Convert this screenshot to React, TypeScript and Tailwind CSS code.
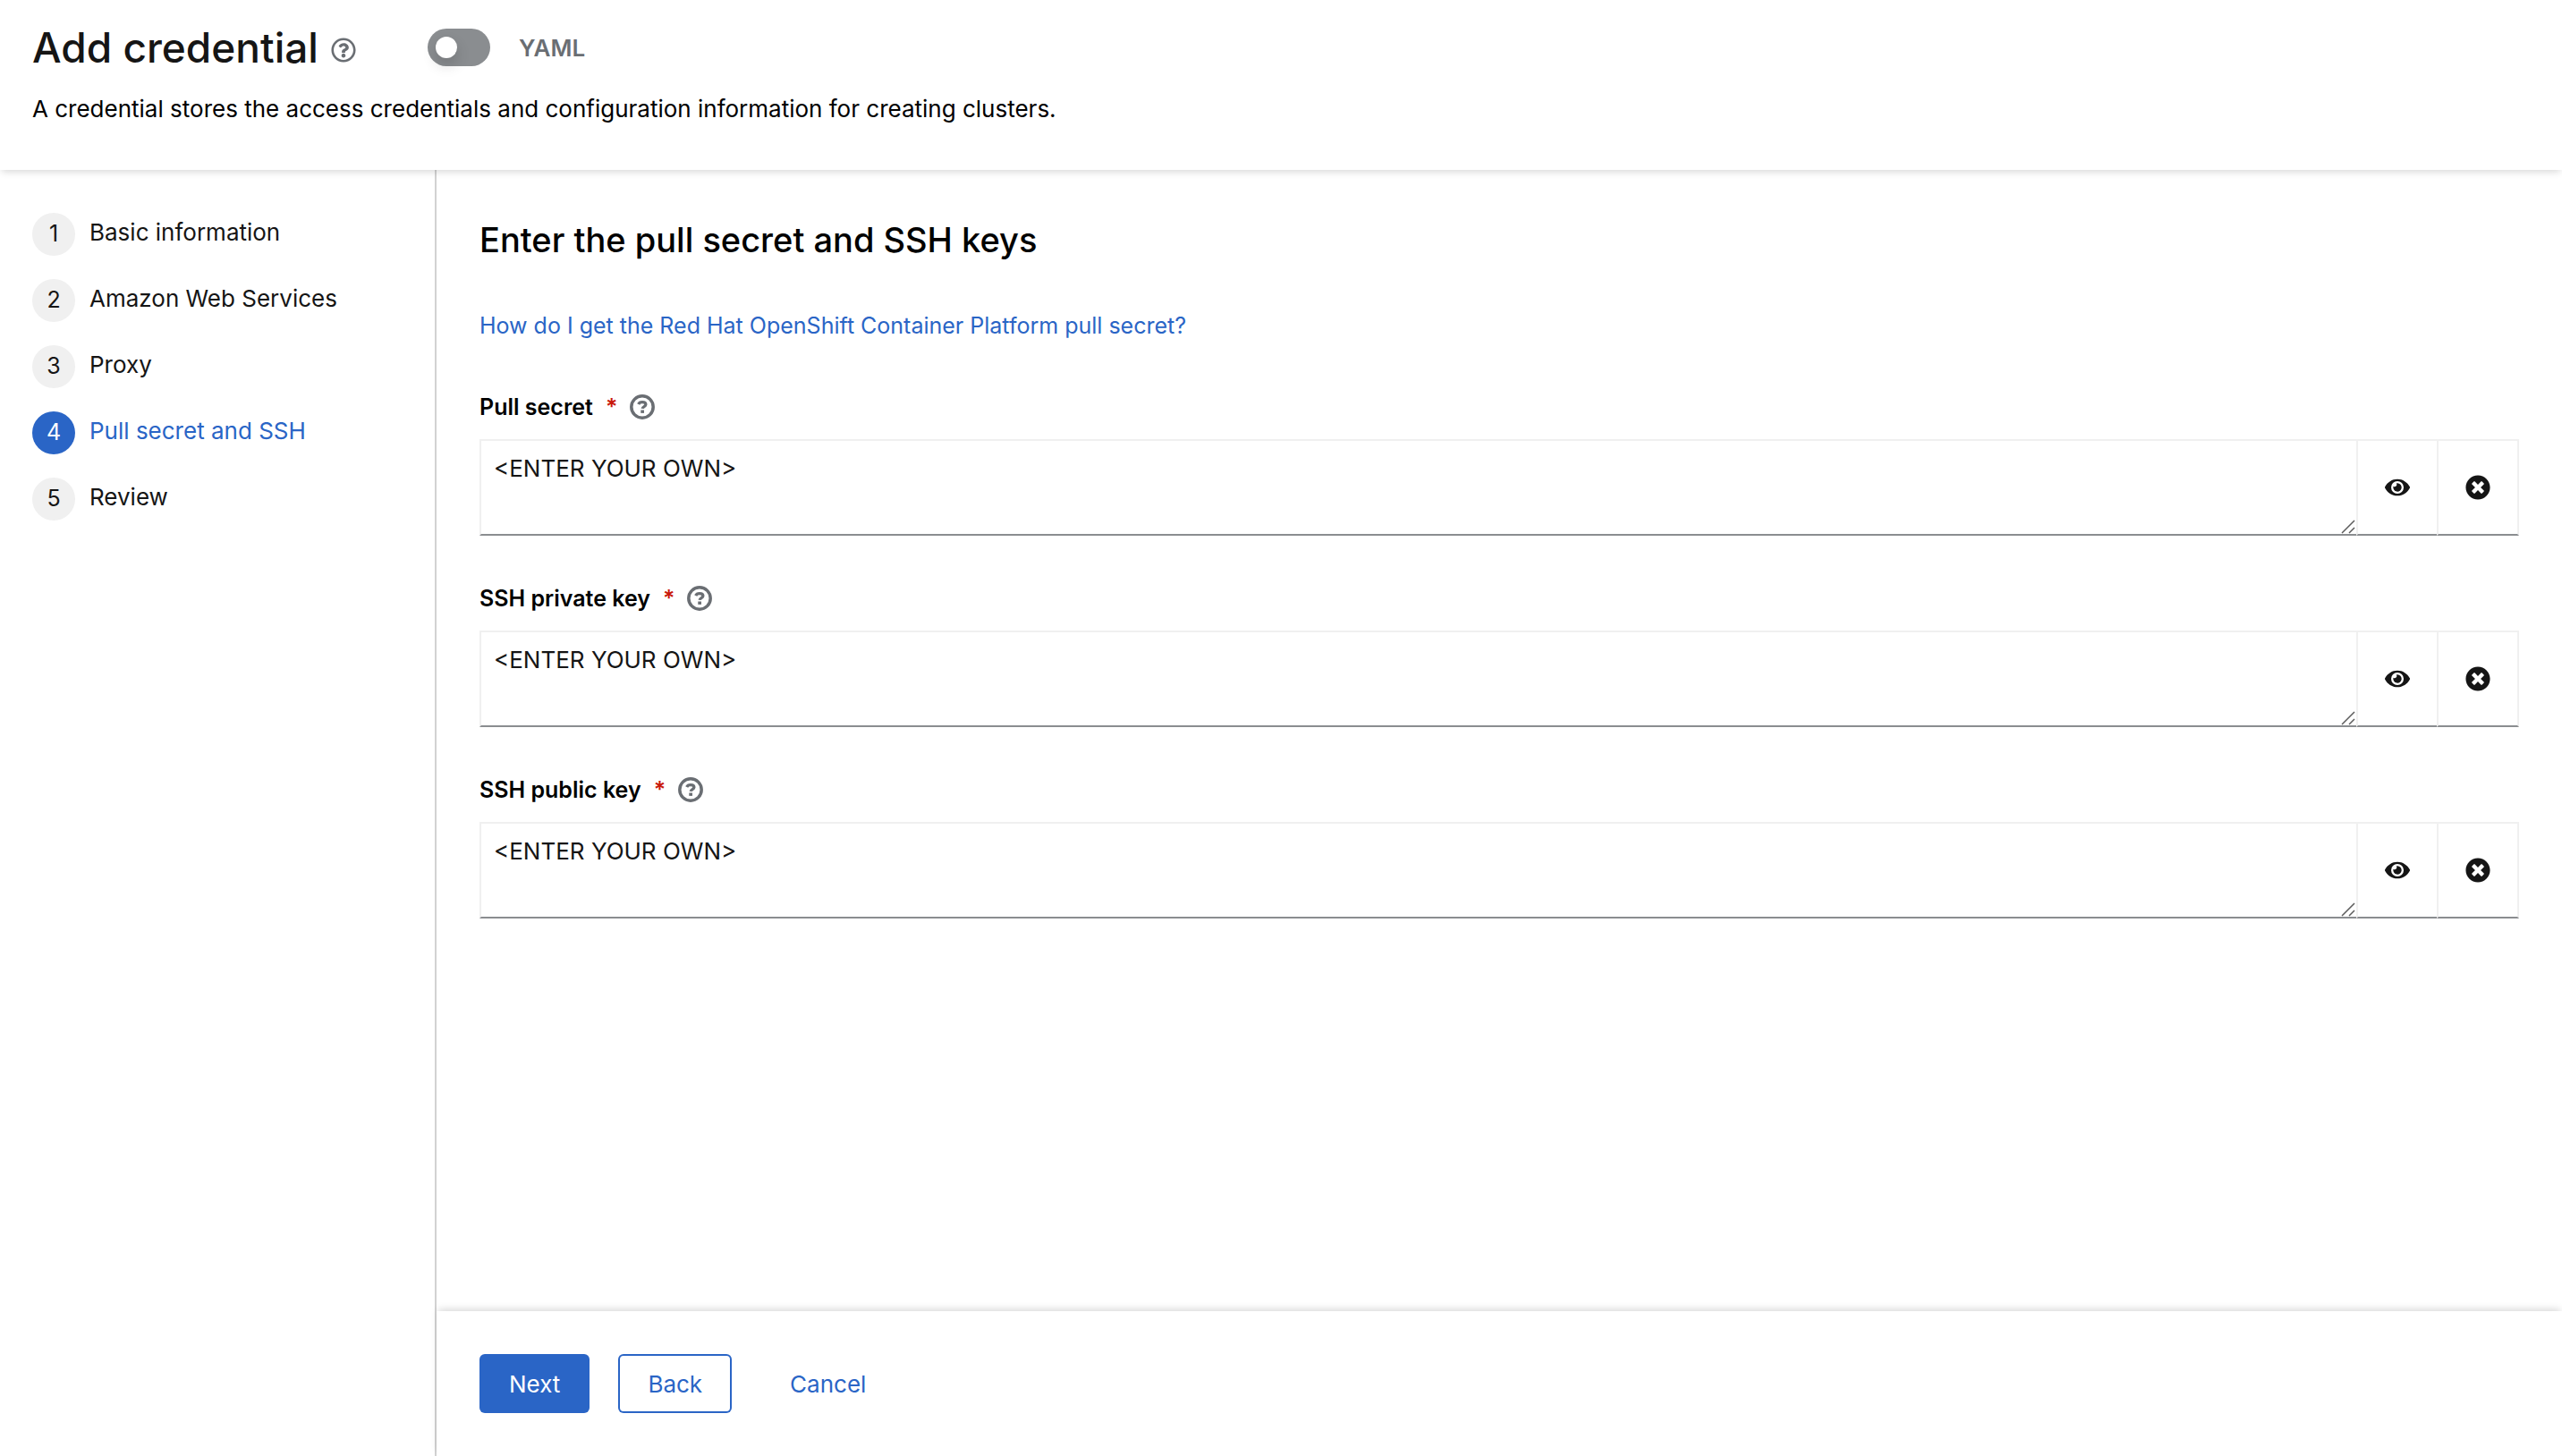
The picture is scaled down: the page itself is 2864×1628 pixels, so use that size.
import { useState } from "react";
import { FaEye, FaRegQuestionCircle, FaTimesCircle } from "react-icons/fa";

const steps = ["Basic information", "Amazon Web Services", "Proxy", "Pull secret and SSH", "Review"];
const currentStep = 3;

const fields = [
  { id: "pull-secret", label: "Pull secret" },
  { id: "ssh-private-key", label: "SSH private key" },
  { id: "ssh-public-key", label: "SSH public key" },
];

function HelpIcon() {
  return (
    <svg viewBox="0 0 28 28" className="size-7" fill="none" stroke="currentColor" aria-hidden="true">
      <circle cx="14" cy="14" r="12.2" strokeWidth="3.5" />
      <path d="M9.7 11C10.4 9.3 11.9 8.6 14 8.6c2.4 0 3.9 1.1 3.9 2.7 0 2.4-3.5 2.1-3.7 4.6" strokeWidth="3.3" />
      <path d="M12.3 19.2h3.7" strokeWidth="3.4" />
    </svg>
  );
}

function ResizeGrip() {
  return (
    <svg
      viewBox="0 0 16 16"
      className="pointer-events-none absolute right-px bottom-[2px] size-4"
      stroke="#5c5c5c"
      strokeWidth="1.5"
      aria-hidden="true"
    >
      <path d="M1 15 15 1M9 15l6-6" />
    </svg>
  );
}

function SecretField({ id, label }: { id: string; label: string }) {
  const [value, setValue] = useState("<ENTER YOUR OWN>");
  return (
    <div>
      <div className="mb-4 flex h-10 items-center gap-3.5 text-[25px] leading-10">
        <label htmlFor={id} className="flex gap-3.5 font-semibold text-black">
          {label}
          <span aria-hidden="true" className="text-[#c9190b]">*</span>
        </label>
        <button type="button" aria-label={`More info for ${label}`} className="text-[#6a6e73]">
          <HelpIcon />
        </button>
      </div>
      <div className="flex h-[108px]">
        <div className="relative flex-1">
          <textarea
            id={id}
            value={value}
            onChange={(e) => setValue(e.target.value)}
            className="block h-full w-full resize-none overflow-hidden border-2 border-r-0 border-[#f0f0f0] border-b-[#8a8d90] px-3.5 py-2.5 text-[26px] leading-[42px] text-[#151515] outline-none"
          />
          <ResizeGrip />
        </div>
        <button
          type="button"
          aria-label={`Show ${label}`}
          className="flex w-[90px] items-center justify-center border-2 border-r-0 border-[#f0f0f0] border-b-[#8a8d90] text-[#151515]"
        >
          <FaEye className="size-7" />
        </button>
        <button
          type="button"
          aria-label={`Clear ${label}`}
          className="flex w-[92px] items-center justify-center border-2 border-[#f0f0f0] border-b-[#8a8d90] text-[#151515]"
        >
          <FaTimesCircle className="size-7" />
        </button>
      </div>
    </div>
  );
}

export default function App() {
  const [yaml, setYaml] = useState(false);
  return (
    <div className="flex min-h-screen flex-col bg-white font-[Inter,sans-serif] text-[26px] text-[#151515]">
      <header className="relative z-10 bg-white px-9 pt-6 pb-12 shadow-[0_4px_8px_-2px_rgba(3,3,3,0.16)]">
        <div className="flex h-[58px] items-center">
          <h1 className="text-[46px] font-medium">Add credential</h1>
          <button type="button" aria-label="About credentials" className="ml-3.5 pt-1.5 text-[#6a6e73]">
            <FaRegQuestionCircle className="size-7" />
          </button>
          <label className="ml-20 flex items-center gap-8 font-semibold text-[#6a6e73]">
            <input
              type="checkbox"
              role="switch"
              checked={yaml}
              onChange={(e) => setYaml(e.target.checked)}
              className="h-[42px] w-[70px] appearance-none rounded-full bg-[#8a8d90] p-[9px] before:block before:size-6 before:rounded-full before:bg-white before:shadow-[0_8px_16px_rgba(3,3,3,0.16)] checked:bg-[#2a65c6] checked:before:ml-auto"
            />
            YAML
          </label>
        </div>
        <p className="mt-5 leading-10 text-black">
          A credential stores the access credentials and configuration information for creating clusters.
        </p>
      </header>

      <div className="flex flex-1">
        <nav aria-label="Steps" className="w-[488px] shrink-0 border-r-2 border-[#d2d2d2] px-9 pt-12">
          <ol className="flex flex-col gap-[26px]">
            {steps.map((step, i) => {
              const current = i === currentStep;
              return (
                <li key={step}>
                  <button
                    type="button"
                    aria-current={current ? "step" : undefined}
                    className={`flex items-start gap-4 ${current ? "text-[#2a65c6]" : ""}`}
                  >
                    <span
                      className={`flex size-12 items-center justify-center rounded-full text-[25px] ${
                        current ? "bg-[#2a65c6] text-white" : "bg-[#f0f0f0]"
                      }`}
                    >
                      {i + 1}
                    </span>
                    <span className="leading-[44px]">{step}</span>
                  </button>
                </li>
              );
            })}
          </ol>
        </nav>

        <div className="flex min-w-0 flex-1 flex-col">
          <main className="flex-1 px-12 pt-12">
            <h2 className="text-[38px] leading-[60px] font-medium text-black">Enter the pull secret and SSH keys</h2>
            <p className="mt-[46px] mb-[50px] text-[25px] leading-[41px]">
              <a href="#pull-secret-help" className="text-[#2a65c6]">
                How do I get the Red Hat OpenShift Container Platform pull secret?
              </a>
            </p>
            <form className="flex flex-col gap-[50px]">
              {fields.map((field) => (
                <SecretField key={field.id} {...field} />
              ))}
            </form>
          </main>
          <footer className="flex gap-8 bg-white p-12 shadow-[0_-4px_8px_-2px_rgba(3,3,3,0.16)]">
            <button type="button" className="h-[66px] rounded-md bg-[#2a65c6] px-[33px] text-white">
              Next
            </button>
            <button type="button" className="h-[66px] rounded-md px-[33px] text-[#2a65c6] inset-ring-2 inset-ring-[#2a65c6]">
              Back
            </button>
            <button type="button" className="h-[66px] px-[33px] text-[#2a65c6]">
              Cancel
            </button>
          </footer>
        </div>
      </div>
    </div>
  );
}
